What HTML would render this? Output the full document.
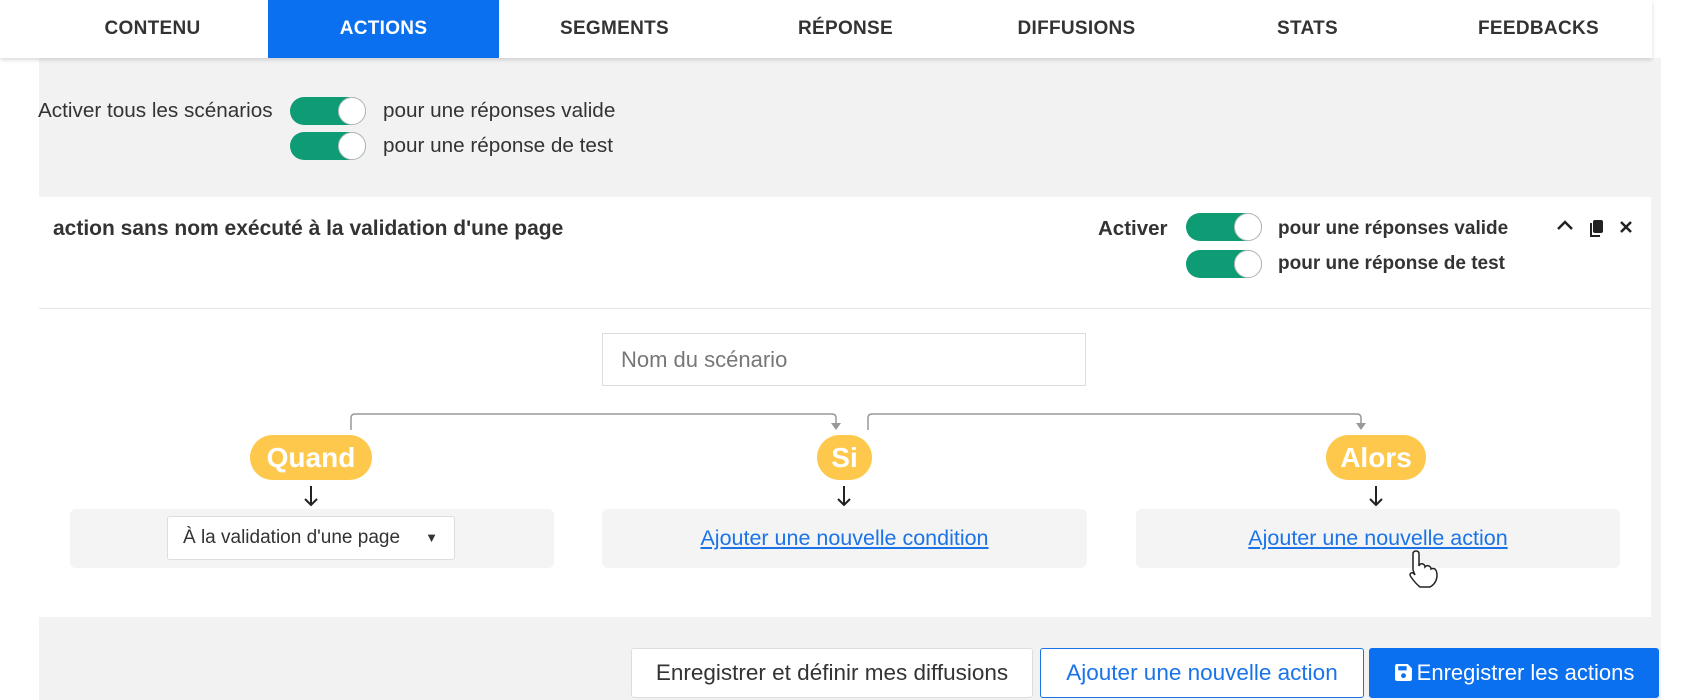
<!DOCTYPE html>
<html><head><meta charset="utf-8"><style>
*{margin:0;padding:0;box-sizing:border-box}
body{width:1700px;height:700px;overflow:hidden;background:#fff;font-family:"Liberation Sans",sans-serif;color:#333;position:relative}
.a{position:absolute}
.nav{left:0;top:0;width:1652px;height:58px;background:#fff;box-shadow:0 2px 4px rgba(0,0,0,.15);z-index:3}
.tab{position:absolute;top:0;height:58px;width:231px;line-height:58px;text-align:center;font-size:19px;font-weight:bold;color:#333;letter-spacing:.3px}
.tab.on{background:#0a70f0;color:#fff}
.gray{left:39px;top:58px;width:1622px;height:642px;background:#f2f2f2}
.tg{position:absolute;width:76px;height:28px;border-radius:14px;background:#0d9c73}
.tg::after{content:"";position:absolute;right:0;top:0;width:28px;height:28px;border-radius:50%;background:#fff;border:1px solid #bbb;box-sizing:border-box}
.t{position:absolute;font-size:20.7px;white-space:nowrap;line-height:28px}
.card{left:39px;top:197px;width:1612px;height:420px;background:#fff}
.badge{position:absolute;top:435px;height:45px;border-radius:23px;background:#fec84c;color:#fff;font-size:28px;font-weight:bold;text-align:center;line-height:45px}
.arr{position:absolute;top:485px}
.box{position:absolute;top:509px;height:59px;background:#f4f4f4;border-radius:6px;text-align:center;line-height:59px}
.lk{color:#1b73e8;text-decoration:underline;font-size:21.5px}
.btn{position:absolute;top:648px;height:50px;line-height:48px;font-size:22.5px;text-align:center;border-radius:3px;white-space:nowrap}
</style></head><body>
<div class="a gray"></div>
<div class="a nav">
<div class="tab" style="left:37px">CONTENU</div>
<div class="tab on" style="left:268px">ACTIONS</div>
<div class="tab" style="left:499px">SEGMENTS</div>
<div class="tab" style="left:730px">RÉPONSE</div>
<div class="tab" style="left:961px">DIFFUSIONS</div>
<div class="tab" style="left:1192px">STATS</div>
<div class="tab" style="left:1423px">FEEDBACKS</div>
</div>
<div class="t" style="left:38px;top:97px">Activer tous les scénarios</div>
<div class="tg" style="left:290px;top:97px"></div>
<div class="t" style="left:383px;top:97px">pour une réponses valide</div>
<div class="tg" style="left:290px;top:132px"></div>
<div class="t" style="left:383px;top:132px">pour une réponse de test</div>

<div class="a card"></div>
<div class="t" style="left:53px;top:215px;font-weight:bold;font-size:21px">action sans nom exécuté à la validation d'une page</div>
<div class="t" style="left:1098px;top:215px;font-weight:bold;font-size:20.5px">Activer</div>
<div class="tg" style="left:1186px;top:213px"></div>
<div class="t" style="left:1278px;top:215px;font-weight:bold;font-size:19px">pour une réponses valide</div>
<div class="tg" style="left:1186px;top:250px"></div>
<div class="t" style="left:1278px;top:250px;font-weight:bold;font-size:19px">pour une réponse de test</div>
<svg class="a" style="left:1550px;top:212px" width="95" height="30" viewBox="0 0 95 30">
<path d="M8 17 L15 10 L22 17" fill="none" stroke="#222" stroke-width="2.5"/>
<rect x="43" y="8" width="10" height="13" rx="2" fill="#222"/>
<path d="M41 11 V24 H50" fill="none" stroke="#222" stroke-width="2"/>
<path d="M71 10 L81 20 M81 10 L71 20" stroke="#222" stroke-width="2.5"/>
</svg>
<div class="a" style="left:39px;top:308px;width:1612px;height:1px;background:#e6e6e6"></div>

<div class="a" style="left:602px;top:333px;width:484px;height:53px;border:1px solid #ddd;background:#fff;font-size:22px;color:#777;line-height:51px;padding-left:18px">Nom du scénario</div>

<svg class="a" style="left:0;top:405px" width="1700" height="30">
<path d="M351 25 V13 Q351 9 355 9 H832 Q836 9 836 13 V18" fill="none" stroke="#999" stroke-width="1.5"/>
<path d="M831 18 H841 L836 25 Z" fill="#999"/>
<path d="M868 25 V13 Q868 9 872 9 H1357 Q1361 9 1361 13 V18" fill="none" stroke="#999" stroke-width="1.5"/>
<path d="M1356 18 H1366 L1361 25 Z" fill="#999"/>
</svg>
<div class="badge" style="left:250px;width:122px">Quand</div>
<div class="badge" style="left:817px;width:55px">Si</div>
<div class="badge" style="left:1326px;width:100px">Alors</div>
<svg class="arr" style="left:304px" width="14" height="22" viewBox="0 0 14 22"><path d="M7 1 V20 M1 14 L7 20 L13 14" fill="none" stroke="#222" stroke-width="2"/></svg>
<svg class="arr" style="left:837px" width="14" height="22" viewBox="0 0 14 22"><path d="M7 1 V20 M1 14 L7 20 L13 14" fill="none" stroke="#222" stroke-width="2"/></svg>
<svg class="arr" style="left:1369px" width="14" height="22" viewBox="0 0 14 22"><path d="M7 1 V20 M1 14 L7 20 L13 14" fill="none" stroke="#222" stroke-width="2"/></svg>

<div class="box" style="left:70px;width:484px"></div>
<div class="a" style="left:167px;top:516px;width:288px;height:44px;background:#fff;border:1px solid #ddd;border-radius:3px;font-size:19px;line-height:42px;padding-left:15px;color:#333;white-space:nowrap">À la validation d'une page<span style="position:absolute;right:16px;top:0;font-size:13px">▼</span></div>
<div class="box" style="left:602px;width:485px"><span class="lk">Ajouter une nouvelle condition</span></div>
<div class="box" style="left:1136px;width:484px"><span class="lk">Ajouter une nouvelle action</span></div>
<svg class="a" style="left:1403px;top:550px" width="40" height="40" viewBox="0 0 40 40">
<path d="M10 4 Q10 1 13 1 Q16 1 16 4 V16 Q17 13 20 14 Q22 15 22 17 Q24 15 26 16 Q28 17 28 19 Q30 18 32 19 Q34 21 34 25 Q34 33 27 37 H17 Q13 34 8 27 Q6 24 8 23 Q10 22 12 25 L10 20 Z" fill="#fff" stroke="#222" stroke-width="1.5"/>
</svg>

<div class="btn" style="left:631px;width:402px;background:#fff;border:1px solid #ddd;color:#333">Enregistrer et définir mes diffusions</div>
<div class="btn" style="left:1040px;width:324px;background:#fff;border:1px solid #1b73e8;color:#1b73e8">Ajouter une nouvelle action</div>
<div class="btn" style="left:1369px;width:290px;background:#0a70f0;color:#fff;border:1px solid #0a70f0;font-size:22px"><svg width="19" height="19" viewBox="0 0 18 18" style="vertical-align:-2px;margin-right:4px"><path d="M1 3 Q1 1 3 1 H13 L17 5 V15 Q17 17 15 17 H3 Q1 17 1 15 Z" fill="#fff"/><rect x="4" y="3" width="8" height="4" fill="#0a70f0"/><circle cx="9" cy="12" r="2.3" fill="#0a70f0"/></svg>Enregistrer les actions</div>
</body></html>
